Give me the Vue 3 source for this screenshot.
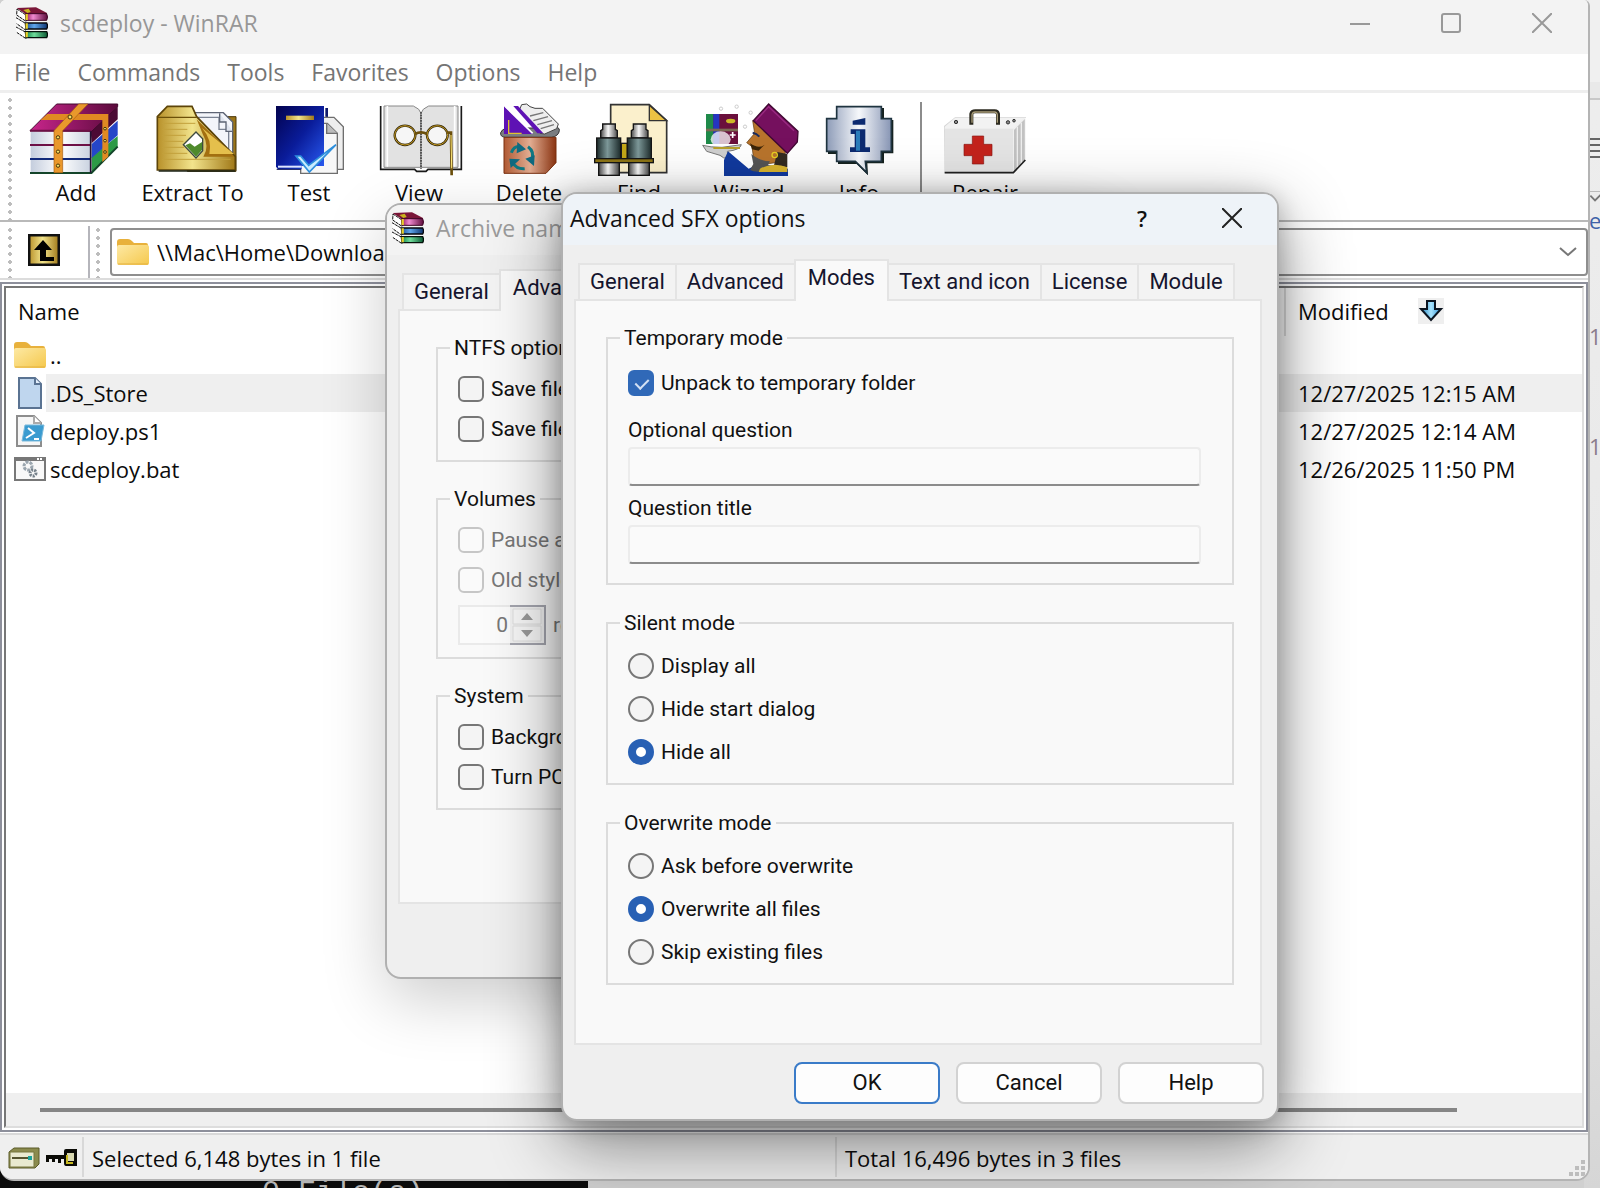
<script setup>
import { ref } from 'vue'

const menus = ['File', 'Commands', 'Tools', 'Favorites', 'Options', 'Help']

const files = [
  { icon: 'folder', name: '..', modified: '' },
  { icon: 'file', name: '.DS_Store', modified: '12/27/2025 12:15 AM', selected: true },
  { icon: 'ps1', name: 'deploy.ps1', modified: '12/27/2025 12:14 AM' },
  { icon: 'bat', name: 'scdeploy.bat', modified: '12/26/2025 11:50 PM' }
]

const sfxTabs = ['General', 'Advanced', 'Modes', 'Text and icon', 'License', 'Module']
const unpackTemp = ref(true)
const question = ref('')
const questionTitle = ref('')
const silent = ref('Hide all')
const overwrite = ref('Overwrite all files')
const silentModes = ['Display all', 'Hide start dialog', 'Hide all']
const overwriteModes = ['Ask before overwrite', 'Overwrite all files', 'Skip existing files']
</script>

<template>
  <div class="desktop">
    <svg class="defs" aria-hidden="true">
      <defs>
        <linearGradient id="mag" x1="0" x2="1"><stop offset="0" stop-color="#8a1257" /><stop offset=".35" stop-color="#f08ad0" /><stop offset="1" stop-color="#5e0c3c" /></linearGradient>
        <linearGradient id="blu" x1="0" x2="1"><stop offset="0" stop-color="#1c4f96" /><stop offset=".4" stop-color="#5fa5ea" /><stop offset="1" stop-color="#0d3470" /></linearGradient>
        <linearGradient id="grn" x1="0" x2="1"><stop offset="0" stop-color="#12804a" /><stop offset=".4" stop-color="#6fdc9a" /><stop offset="1" stop-color="#0b5a34" /></linearGradient>
        <linearGradient id="fold" x1="0" y1="0" x2="1" y2="1"><stop offset="0" stop-color="#fde9a4" /><stop offset="1" stop-color="#f5c84c" /></linearGradient>
        <linearGradient id="gold" x1="0" x2="1"><stop offset="0" stop-color="#b8912a" /><stop offset=".45" stop-color="#f2e48c" /><stop offset="1" stop-color="#a07818" /></linearGradient>
        <linearGradient id="page" x1="0" x2="1"><stop offset="0" stop-color="#c4cddd" /><stop offset=".5" stop-color="#ffffff" /><stop offset="1" stop-color="#c9d2e0" /></linearGradient>
        <linearGradient id="cover" x1="0" x2="1"><stop offset="0" stop-color="#c9258c" /><stop offset="1" stop-color="#5b0a3c" /></linearGradient>
        <linearGradient id="navy" x1="0" y1="0" x2="1" y2="1"><stop offset="0" stop-color="#02024e" /><stop offset=".5" stop-color="#0a1c9a" /><stop offset="1" stop-color="#2a5cf4" /></linearGradient>
        <linearGradient id="steel" x1="0" x2="1"><stop offset="0" stop-color="#8e9cb8" /><stop offset=".5" stop-color="#f6f8fb" /><stop offset="1" stop-color="#8795b4" /></linearGradient>
        <linearGradient id="lens" x1="0" x2="1"><stop offset="0" stop-color="#1d2b2b" /><stop offset=".45" stop-color="#7d9899" /><stop offset="1" stop-color="#1d2b2b" /></linearGradient>
        <linearGradient id="chrome" x1="0" x2="1"><stop offset="0" stop-color="#4a4a4a" /><stop offset=".45" stop-color="#f8f8f8" /><stop offset="1" stop-color="#4a4a4a" /></linearGradient>
        <linearGradient id="copper" x1="0" x2="1"><stop offset="0" stop-color="#b05a34" /><stop offset=".5" stop-color="#e2ad92" /><stop offset="1" stop-color="#8a3412" /></linearGradient>
        <linearGradient id="sky" x1="0" x2="1"><stop offset="0" stop-color="#1f7fb8" /><stop offset=".5" stop-color="#a8e4ff" /><stop offset="1" stop-color="#2b8fd0" /></linearGradient>
      </defs>
      <symbol id="books" viewBox="0 0 96 96">
        <path d="M0 32 30 50V70L2 50M0 60 30 76V95L2 76" fill="#fff" stroke="#111" stroke-width="3" stroke-dasharray="9 2" />
        <path d="M3 6 30 24V43L2 24Z" fill="#fff" stroke="#111" stroke-width="3" stroke-dasharray="9 2" />
        <path d="M2 3 60 1 93 18 92 22H30Z" fill="#7a1638" />
        <path d="M22 9 38 5 44 15 34 18Z" fill="#c9b51d" />
        <path d="M28 20H92Q97 30 92 40H30Z" fill="url(#mag)" stroke="#3d0524" stroke-width="3" />
        <path d="M28 48H92Q97 57 92 66H30Z" fill="url(#blu)" stroke="#05070d" stroke-width="4" />
        <path d="M28 74H92Q97 83 92 92H30Z" fill="url(#grn)" stroke="#04100a" stroke-width="4" />
        <path d="M32 21V39M32 49V65M32 75V91" stroke="#e8d02a" stroke-width="7" />
      </symbol>
      <symbol id="folder" viewBox="0 0 32 32">
        <path d="M0 6Q0 3 3 3H11Q13 3 15 5L17 7H29Q31 7 31 9V14H0Z" fill="#e8b13c" />
        <rect y="9" width="32" height="20" rx="2" fill="url(#fold)" />
        <path d="M1 28H31" stroke="#e3b040" stroke-width="1" />
      </symbol>
    </svg>

    <!-- terminal and file manager windows that lie behind -->
    <div class="terminal">0 File(s)</div>
    <div class="behind">
      <span class="behind-title"></span>
      <span class="behind-bar"></span>
      <span class="behind-lines"></span>
      <svg class="behind-chevron" viewBox="0 0 12 14"><path d="M1 4 6 9 12 3" fill="none" stroke="#777" stroke-width="2" /></svg>
      <span class="behind-text blue">e</span>
      <span class="behind-text">12</span>
      <span class="behind-text low">11</span>
    </div>

    <main class="window">
      <header class="titlebar">
        <svg class="app-icon"><use href="#books" /></svg>
        <h1>scdeploy - WinRAR</h1>
        <div class="controls">
          <button aria-label="Minimize"><svg viewBox="0 0 20 20"><path d="M0 11H20" /></svg></button>
          <button aria-label="Maximize"><svg viewBox="0 0 20 20"><rect x="1" y="1" width="18" height="18" rx="2" /></svg></button>
          <button aria-label="Close"><svg viewBox="0 0 20 20"><path d="M0 0 20 20M20 0 0 20" /></svg></button>
        </div>
      </header>

      <nav class="menubar"><button v-for="m in menus" :key="m">{{ m }}</button></nav>

      <div class="toolbar">
        <i class="grip"></i>
        <button class="tool">
          <svg viewBox="84 306 288 222">
            <path d="M275 470 353 408V440L275 522Z" fill="#2c9a46" /><path d="M275 432 353 362V406L275 474Z" fill="#2546c8" /><path d="M272 394 353 320V358L275 430Z" fill="#4c0a34" />
            <path d="M92 478H272V520H92Z" fill="url(#page)" /><path d="M92 436H272V476H92Z" fill="url(#page)" /><path d="M92 394H272V434H92Z" fill="url(#page)" />
            <path d="M90 392 170 312H353V320L275 394Z" fill="url(#cover)" stroke="#42082c" stroke-width="3" />
            <path d="M90 435H272M90 392H272" stroke="#6d1046" stroke-width="6" /><path d="M90 477H272" stroke="#122a7a" stroke-width="6" /><path d="M90 519H274L353 440" stroke="#14452a" stroke-width="6" fill="none" />
            <path d="M272 394V518" stroke="#241030" stroke-width="5" />
            <path d="M122 360 142 342H325V470L307 486V360Z" fill="#e08a22" /><path d="M162 392 236 312H264L188 392V518H162Z" fill="#e9982c" stroke="#a85c10" stroke-width="2" />
            <g fill="#f7e36a" stroke="#4a3608" stroke-width="3"><circle cx="210" cy="351" r="6" /><circle cx="174" cy="412" r="5" /><circle cx="174" cy="455" r="5" /><circle cx="174" cy="497" r="5" /><circle cx="315" cy="386" r="4" /><circle cx="315" cy="422" r="4" /><circle cx="315" cy="456" r="4" /></g>
          </svg>
          <span>Add</span>
        </button>
        <button class="tool wide">
          <svg viewBox="433 306 288 222">
            <path d="M560 350H706V514H560Z" fill="#9a7418" stroke="#4b3606" stroke-width="3" />
            <path d="M580 338H668L696 366V480H580Z" fill="#f3f5fa" stroke="#5d6474" stroke-width="4" /><path d="M590 352H655V388H684V470" fill="none" stroke="#7a8292" stroke-width="4" /><path d="M657 340V366H676V394H696" fill="#dfe4ee" stroke="#5d6474" stroke-width="4" />
            <path d="M470 510V350L500 319H574L588 350 704 470V510Z" fill="url(#gold)" stroke="#5d4408" stroke-width="5" />
            <path d="M472 352H588" stroke="#6d5008" stroke-width="4" /><path d="M484 370H584M484 388H560M484 406H556M484 424H548M484 442H550M484 460H560M484 478H690" stroke="#c2a03c" stroke-width="3" />
            <path d="M588 358 702 470H608Q628 440 606 402Z" fill="#a36f10" /><path d="M604 384Q636 420 626 462H700Z" fill="#e5bf4c" />
            <path d="M548 434 586 396 606 416V452L586 474Z" fill="#fff" stroke="#3e4a3e" stroke-width="4" /><path d="M554 436 568 430 582 440 604 426V450L586 470Z" fill="#4f8a2c" />
            <path d="M474 513H704" stroke="#1b2216" stroke-width="5" />
          </svg>
          <span>Extract To</span>
        </button>
        <button class="tool">
          <svg viewBox="783 306 288 222">
            <path d="M976 324H984V352L976 350Z" fill="#101a6a" />
            <path d="M965 352H1002L1030 380V508H965Z" fill="#eee" stroke="#6e6e6e" stroke-width="4" /><path d="M902 370H982L1012 400V520H902Z" fill="#f7f7f7" stroke="#6e6e6e" stroke-width="4" />
            <path d="M980 370V400H1012" fill="#bbb" stroke="#6e6e6e" stroke-width="4" />
            <path d="M828 318H972V498H905V508H834L828 500Z" fill="url(#navy)" /><path d="M834 500H905" stroke="#dfe6ff" stroke-width="6" /><path d="M830 508H902" stroke="#0a1250" stroke-width="3" />
            <rect x="858" y="347" width="84" height="13" fill="url(#gold)" />
            <path d="M888 468 902 468 926 496 1008 434 928 516Z" fill="#c9ecff" stroke="#2e8fdc" stroke-width="5" />
          </svg>
          <span>Test</span>
        </button>
        <button class="tool">
          <svg viewBox="3 36 288 222">
            <path d="M32 48V238H134L140 244H168L174 238H274V48" fill="#fff" stroke="#1a1a1a" stroke-width="5" />
            <path d="M42 48H130Q150 56 153 70V232H42Z" fill="#e2e2e2" stroke="#888" stroke-width="3" /><path d="M264 48H176Q156 56 153 70V232H264Z" fill="#e2e2e2" stroke="#888" stroke-width="3" />
            <path d="M52 48V230M254 48V230" stroke="#fff" stroke-width="5" />
            <path d="M153 66V236" stroke="#555" stroke-width="6" stroke-dasharray="5 3" />
            <g fill="#fff" fill-opacity=".7" stroke="#332606" stroke-width="7"><ellipse cx="105" cy="136" rx="31" ry="29" /><ellipse cx="202" cy="136" rx="31" ry="29" /></g>
            <g fill="none" stroke="#c79d24" stroke-width="3"><ellipse cx="105" cy="136" rx="31" ry="29" /><ellipse cx="202" cy="136" rx="31" ry="29" /></g>
            <path d="M135 132Q153 122 171 132M232 128H243L245 256" fill="none" stroke="#6b4f0c" stroke-width="8" /><path d="M243 135 245 235" stroke="#ffe97a" stroke-width="3" />
          </svg>
          <span>View</span>
        </button>
        <button class="tool">
          <svg viewBox="333 36 288 222">
            <path d="M392 128Q395 118 410 114H545Q570 108 568 122 566 138 545 142H405Q390 140 392 128Z" fill="#7a7d80" stroke="#333" stroke-width="3" />
            <path d="M448 60 455 44 470 42 480 50 495 55 518 55 565 102 560 116 524 132 510 130Z" fill="#eee" stroke="#444" stroke-width="3" />
            <path d="M480 78 520 68M490 92 534 80M502 104 546 92M512 116 552 104" stroke="#777" stroke-width="4" />
            <path d="M402 48 490 132H402Z" fill="#5e12b4" /><path d="M430 48H444L520 130H502Z" fill="#5e12b4" /><path d="M404 48 488 130" stroke="#fff" stroke-width="5" /><path d="M416 90V130H455" fill="none" stroke="#e0c22c" stroke-width="4" />
            <path d="M402 142H558V218L528 250H402Z" fill="url(#copper)" stroke="#7a3010" stroke-width="3" />
            <g fill="none" stroke="#0f7882" stroke-width="9"><path d="M424 188Q432 166 452 170" /><path d="M474 170Q496 186 484 212" /><path d="M464 236Q440 238 428 218" /></g>
            <path d="M442 156 468 178 440 190ZM466 206 492 228 494 196ZM418 206 450 208 422 234Z" fill="#0f6a80" />
          </svg>
          <span>Delete</span>
        </button>
        <button class="tool">
          <svg viewBox="663 36 288 222">
            <path d="M722 44H838L890 92V248H722Z" fill="#fbf0cc" stroke="#333" stroke-width="5" /><path d="M838 46V92H890Z" fill="#ecc244" stroke="#333" stroke-width="4" />
            <rect x="754" y="160" width="18" height="50" fill="#c4a818" stroke="#222" stroke-width="4" />
            <g stroke="#161616" stroke-width="4">
              <path d="M698 102H736V118L742 122V144H692V122L698 118Z" fill="url(#chrome)" /><path d="M790 102H828V118L834 122V144H784V122L790 118Z" fill="url(#chrome)" />
              <rect x="680" y="144" width="72" height="62" fill="url(#lens)" /><rect x="772" y="144" width="72" height="62" fill="url(#lens)" />
              <rect x="674" y="206" width="176" height="12" fill="#8c7416" />
              <rect x="686" y="218" width="62" height="38" fill="url(#chrome)" /><rect x="776" y="218" width="62" height="38" fill="url(#chrome)" />
            </g>
          </svg>
          <span>Find</span>
        </button>
        <button class="tool">
          <svg viewBox="33 36 288 222">
            <rect x="48" y="72" width="96" height="90" fill="#6a0f3c" /><rect x="48" y="72" width="22" height="90" fill="#1f8a4a" /><rect x="70" y="72" width="18" height="90" fill="#2436c0" />
            <path d="M48 120H144" stroke="#7b6a52" stroke-width="8" /><ellipse cx="122" cy="93" rx="14" ry="7" fill="#cdb928" /><ellipse cx="92" cy="148" rx="30" ry="24" fill="#fff" fill-opacity=".75" />
            <path d="M128 126V144M119 135H137" stroke="#fff" stroke-width="5" />
            <path d="M38 166Q60 172 96 172L154 164Q150 180 112 184L114 206Q100 206 90 196L50 184Z" fill="#cfcfcf" stroke="#777" stroke-width="3" /><path d="M70 174H150" stroke="#b7a02a" stroke-width="6" />
            <path d="M114 184 176 236 210 220 294 236V258H102V210Z" fill="#123a9e" />
            <path d="M188 92 194 130 170 158 186 170 190 200 230 222 282 214 286 186 250 130Z" fill="#b8742c" stroke="#5a3408" stroke-width="2" />
            <path d="M180 160Q206 178 224 164L206 182 186 178Z" fill="#3b2408" /><path d="M184 192Q206 212 240 214L226 240Q200 250 180 240L190 222Z" fill="#555" /><path d="M262 186 292 192V232L252 226Z" fill="#332a20" />
            <path d="M210 236Q250 214 292 232V246H206Z" fill="#d8b32e" />
            <path d="M190 92 236 42 324 124 322 156 292 190Z" fill="#75105e" stroke="#3f0832" stroke-width="4" /><path d="M198 92 236 50 312 122" fill="none" stroke="#9a2a82" stroke-width="4" />
            <path d="M188 128Q200 130 208 140" stroke="#1c2c5c" stroke-width="6" fill="none" /><circle cx="254" cy="195" r="8" fill="none" stroke="#e9cf22" stroke-width="4" />
            <g fill="none" stroke="#ccc" stroke-width="3"><circle cx="93" cy="56" r="5" /><circle cx="140" cy="50" r="5" /><circle cx="182" cy="68" r="5" /><circle cx="165" cy="110" r="5" /></g>
          </svg>
          <span>Wizard</span>
        </button>
        <button class="tool">
          <svg viewBox="363 36 288 222">
            <path d="M446 54H582V90H610V190H582V220H532L534 256 500 222H444V192H414V90H446Z" fill="#16221e" />
            <path d="M440 50H574V86H604V184H574V214H526L530 248 496 214H440V184H410V86H440Z" fill="url(#steel)" stroke="#1f3440" stroke-width="5" />
            <path d="M488 92 526 84V104H488ZM482 118H526V172H540V186H480V172H494V132H482Z" fill="#0c2a70" /><path d="M498 122H510V182H498Z" fill="#2b7cba" />
          </svg>
          <span>Info</span>
        </button>
        <i class="divider"></i>
        <button class="tool">
          <svg viewBox="741 36 288 222">
            <path d="M762 108 795 82H1008V210L970 250H764Z" fill="#d4d4d4" /><path d="M970 120 1006 84V210L970 248Z" fill="#c2c2c2" stroke="#fff" stroke-width="3" /><path d="M982 110V234M994 98V222" stroke="#eee" stroke-width="4" />
            <path d="M764 110 795 84H1004L970 118H764Z" fill="#f2f2f2" /><rect x="764" y="116" width="206" height="132" fill="#e4e4e4" />
            <path d="M764 248H970L1006 210" fill="none" stroke="#222" stroke-width="5" />
            <path d="M844 104V72Q846 64 856 64H914Q922 64 924 72V104" fill="none" stroke="#2c2a20" stroke-width="12" /><path d="M846 98V74Q848 66 856 66H914Q920 66 922 74V98" fill="none" stroke="#a89c78" stroke-width="4" />
            <g fill="#888" stroke="#333" stroke-width="3"><circle cx="798" cy="96" r="5" /><circle cx="954" cy="97" r="5" /><circle cx="972" cy="92" r="4" /></g>
            <path d="M847 138H881V163H906V197H881V222H847V197H822V163H847Z" fill="#c3231c" stroke="#8a1712" stroke-width="2" />
          </svg>
          <span>Repair</span>
        </button>
      </div>

      <div class="addressbar">
        <i class="grip"></i>
        <button class="up" aria-label="Up one level">
          <svg viewBox="0 0 32 32"><rect x="1" y="1" width="30" height="30" fill="url(#gold)" stroke="#111" stroke-width="3" /><path d="M15 6 24 16H18V23H26V27H12V16H6Z" fill="#000" /></svg>
        </button>
        <i class="grip second"></i>
        <label class="path">
          <svg class="path-icon"><use href="#folder" /></svg>
          <select aria-label="Address"><option>\\Mac\Home\Downloads</option></select>
          <svg class="chevron" viewBox="0 0 18 10"><path d="M1 1 9 8 17 1" /></svg>
        </label>
      </div>

      <section class="list">
        <div class="list-body">
          <table>
            <thead>
              <tr>
                <th colspan="2">Name</th>
                <th class="modified">
                  <div class="sort">Modified
                    <svg viewBox="0 0 26 26"><rect width="26" height="26" fill="#efefef" /><path d="M9 3H17V11H23L13 22 3 11H9Z" fill="url(#sky)" stroke="#0b1420" stroke-width="2" /></svg>
                  </div>
                </th>
              </tr>
            </thead>
            <tbody>
              <tr v-for="f in files" :key="f.name" :class="{ selected: f.selected }">
                <td class="icon">
                  <svg v-if="f.icon === 'folder'"><use href="#folder" /></svg>
                  <svg v-else-if="f.icon === 'file'" viewBox="0 0 32 32"><path d="M5 1H21L27 7V31H5Z" fill="#bfd6ee" stroke="#5a7392" stroke-width="2" /><path d="M21 1V7H27" fill="#e3eefa" stroke="#5a7392" stroke-width="2" /></svg>
                  <svg v-else-if="f.icon === 'ps1'" viewBox="0 0 32 32"><path d="M3 1H20L27 8V31H3Z" fill="#f6f6f6" stroke="#8d8d8d" stroke-width="2" /><path d="M20 1V8H27" fill="#fff" stroke="#aaa" stroke-width="2" /><path d="M11 10H30L27 26H8Z" fill="#3a9bd0" stroke="#79b9dc" /><path d="M14 13 20 18 12 23M20 24H25" fill="none" stroke="#fff" stroke-width="2" /></svg>
                  <svg v-else viewBox="0 0 32 32"><rect x="1" y="5" width="30" height="22" fill="#f8f8f8" stroke="#777" stroke-width="2" /><path d="M1 6H31" stroke="#777" stroke-width="4" /><path d="M23 6H28" stroke="#fff" stroke-dasharray="2 1" stroke-width="2" /><circle cx="14" cy="13" r="4" fill="none" stroke="#9aa5ae" stroke-width="3" stroke-dasharray="3 1" /><circle cx="19" cy="20" r="3" fill="none" stroke="#75808a" stroke-width="3" stroke-dasharray="2 1" /></svg>
                </td>
                <td class="name">{{ f.name }}</td>
                <td class="date">{{ f.modified }}</td>
              </tr>
            </tbody>
          </table>
          <div class="scrollbar"><span></span></div>
        </div>
      </section>

      <footer class="status">
        <svg viewBox="0 0 32 22"><path d="M1 5 6 1H31V17L27 21H1Z" fill="#8b8b4e" stroke="#5a5a28" /><path d="M2 5H26V20H2Z" fill="#e9ead0" stroke="#77773e" /><path d="M4 11H24" stroke="#555530" stroke-width="2" /><rect x="20" y="9" width="4" height="4" fill="#1aa39a" /></svg>
        <svg viewBox="0 0 32 22"><path d="M0 8H18V4Q18 2 20 2H31V19H20Q18 19 18 16V12H15V16H12V12H9V15H6V12H3V15H0Z" fill="#0b0b06" /><path d="M21 6H28V14H21Z" fill="#d8d8b0" /><path d="M21 8V16H27" fill="none" stroke="#c8b820" stroke-width="2" /></svg>
        <p>Selected 6,148 bytes in 1 file</p>
        <p>Total 16,496 bytes in 3 files</p>
        <svg class="resize" viewBox="0 0 16 16"><path d="M12 0H16V4H12ZM6 6H10V10H6ZM12 6H16V10H12ZM0 12H4V16H0ZM6 12H10V16H6ZM12 12H16V16H12Z" /></svg>
      </footer>
    </main>

    <section class="dialog archive" aria-label="Archive name and parameters">
      <header class="dialog-title">
        <svg class="app-icon"><use href="#books" /></svg>
        <h2>Archive name and parameters</h2>
      </header>
      <div class="tabs">
        <button>General</button>
        <button class="active">Advanced</button>
      </div>
      <div class="panel">
        <fieldset>
          <legend>NTFS options</legend>
          <label class="option"><input type="checkbox" />Save file security</label>
          <label class="option"><input type="checkbox" />Save file streams</label>
        </fieldset>
        <fieldset class="disabled">
          <legend>Volumes</legend>
          <label class="option"><input type="checkbox" disabled />Pause after each volume</label>
          <label class="option"><input type="checkbox" disabled />Old style volume names</label>
          <label class="option recovery">
            <span class="spin">
              <input type="text" value="0" disabled />
              <svg viewBox="0 0 36 40"><path d="M0 1H35V39H0" fill="#f1f1f1" stroke="#a4a5ae" stroke-width="2" /><path d="M3 4H31V19H3ZM3 21H31V36H3Z" fill="#f7f7f7" stroke="#dedede" /><path d="M11 15 17 8 23 15ZM11 25 17 32 23 25Z" fill="#999" /></svg>
            </span>recovery volumes
          </label>
        </fieldset>
        <fieldset>
          <legend>System</legend>
          <label class="option"><input type="checkbox" />Background archiving</label>
          <label class="option"><input type="checkbox" />Turn PC off when done</label>
        </fieldset>
      </div>
    </section>

    <section class="dialog sfx" role="dialog" aria-label="Advanced SFX options">
      <header class="dialog-title">
        <h2>Advanced SFX options</h2>
        <button class="help">?</button>
        <button class="close" aria-label="Close dialog"><svg viewBox="0 0 20 20"><path d="M0 0 20 20M20 0 0 20" /></svg></button>
      </header>
      <div class="tabs">
        <button v-for="t in sfxTabs" :key="t" :class="{ active: t === 'Modes' }">{{ t }}</button>
      </div>
      <div class="panel">
        <fieldset>
          <legend>Temporary mode</legend>
          <label class="option"><input v-model="unpackTemp" type="checkbox" />Unpack to temporary folder</label>
          <label class="field first" for="question">Optional question</label>
          <input id="question" v-model="question" type="text" />
          <label class="field" for="question-title">Question title</label>
          <input id="question-title" v-model="questionTitle" type="text" />
        </fieldset>
        <fieldset>
          <legend>Silent mode</legend>
          <label v-for="m in silentModes" :key="m" class="option"><input v-model="silent" type="radio" name="silent" :value="m" />{{ m }}</label>
        </fieldset>
        <fieldset>
          <legend>Overwrite mode</legend>
          <label v-for="m in overwriteModes" :key="m" class="option"><input v-model="overwrite" type="radio" name="overwrite" :value="m" />{{ m }}</label>
        </fieldset>
      </div>
      <div class="actions">
        <button class="default">OK</button>
        <button>Cancel</button>
        <button>Help</button>
      </div>
    </section>
  </div>
</template>

<style>
body { background: #cfcfcf; }
</style>

<style scoped>
* { box-sizing: border-box; }
button { padding: 0; border: 0; background: none; color: inherit; font: inherit; white-space: nowrap; }
h1, h2, p { margin: 0; font-size: 22px; font-weight: 400; white-space: nowrap; }
h1, h2 { font-size: 23px; }

.desktop {
  position: relative;
  min-height: 100vh;
  padding: 0 10px 7px 0;
  overflow: hidden;
  display: flex;
  background: #d0d0d0;
  color: #0c0c0c;
  font: 22px/30px "Open Sans", "Noto Sans", sans-serif;
}
.defs { position: absolute; width: 0; height: 0; }

.terminal {
  position: absolute; left: 0; bottom: 0; width: 588px; height: 24px; padding: 12px 0 0 262px;
  overflow: hidden; background: #0b0b0b; color: #b5b5b5; font: 30px/34px "Liberation Mono", monospace;
}
.behind {
  position: absolute; right: 0; top: 0; bottom: 0; width: 16px; padding-left: 5px;
  display: flex; flex-direction: column; overflow: hidden;
  background: linear-gradient(#eee, #e8e8e8 60%, #d6d6d6);
}
.behind-title { height: 82px; background: #f0f0f0; }
.behind-bar { height: 18px; border-bottom: 2px solid #c8c8c8; background: #e9e9e9; }
.behind-lines { height: 20px; margin: 38px 0 33px; background: repeating-linear-gradient(#666 0 2px, #eee 2px 6px); }
.behind-chevron { width: 12px; height: 14px; border-top: 1px solid #bbb; flex: none; }
.behind-text { width: 20px; height: 30px; color: #8a7d8c; }
.behind-text.blue { color: #3f62a8; margin-bottom: 86px; }
.behind-text.low { margin-top: 80px; }

.window {
  position: relative;
  flex: 1;
  min-width: 0;
  display: flex;
  flex-direction: column;
  border: solid #b4b4b4;
  border-width: 0 2px 2px 0;
  border-radius: 6px 6px 14px 14px;
  overflow: hidden;
  background: #fff;
}
.titlebar { display: flex; align-items: center; height: 54px; padding: 0 36px 8px 16px; background: #f3f3f3; }
.app-icon { width: 32px; height: 32px; flex: none; }
.titlebar h1 { margin-left: 12px; color: #979797; }
.controls { display: flex; gap: 71px; margin-left: auto; }
.controls button { width: 20px; height: 20px; display: flex; }
.controls svg, .close svg { width: 20px; height: 20px; fill: none; stroke: #999; stroke-width: 2; }

.menubar { display: flex; align-items: center; gap: 27px; height: 39px; padding-left: 14px; border-bottom: 3px solid #eee; color: #757575; font-size: 23px; }

.toolbar { display: flex; height: 129px; padding: 3px 0 0 8px; border-bottom: 2px solid #b9b9b9; }
.grip { width: 4px; background: radial-gradient(circle, #bdbdbd 2px, transparent 2px) 0 0 / 4px 8px; }
.toolbar .grip { margin-right: 9px; }
.tool { width: 110px; padding-top: 6px; display: flex; flex-direction: column; align-items: center; justify-content: flex-start; flex: none; line-height: 32px; }
.tool.wide { width: 123px; }
.tool svg { width: 96px; height: 74px; overflow: visible; flex: none; }
.divider { width: 2px; height: 120px; margin: 6px 8px 0 6px; background: #8c8c8c; }

.addressbar { display: flex; height: 58px; padding: 4px 0 0 8px; border-bottom: 2px solid #dcdcdc; }
.up { width: 78px; padding: 0 0 4px 16px; border-right: 2px solid #b5b5bb; display: flex; align-items: center; }
.up svg { width: 32px; height: 32px; }
.grip.second { margin: 0 10px 0 6px; }
.path { display: flex; align-items: center; flex: 1; height: 48px; margin-top: 2px; padding: 0 9px 0 5px; border: 2px solid #8e8e8e; border-radius: 4px; }
.path-icon { width: 32px; height: 32px; }
.path select { flex: 1; margin-left: 8px; padding: 0; border: 0; background: none; appearance: none; color: #0c0c0c; font: inherit; }
.chevron { width: 18px; height: 10px; fill: none; stroke: #777; stroke-width: 2; }

.list { flex: 1; display: flex; margin-top: 2px; padding: 2px; border: 2px solid #8d8f9b; }
.list-body { flex: 1; display: flex; flex-direction: column; justify-content: space-between; border: 2px solid #777; border-right-color: #ddd; border-bottom-color: #ddd; }
table { width: 100%; border-collapse: collapse; table-layout: auto; }
th { height: 48px; padding: 0 0 2px 12px; text-align: left; font-weight: 400; }
th.modified { width: 297px; border-left: 2px solid #ddd; padding-left: 12px; }
.sort { display: flex; align-items: center; gap: 29px; }
.sort svg { width: 26px; height: 26px; }
td { height: 38px; padding: 0; }
td.icon { width: 40px; padding-left: 8px; }
td.icon svg { display: block; width: 32px; height: 32px; }
td.name { padding-left: 4px; }
td.date { padding-left: 13px; }
.selected .name, .selected .date { background: #efefef; }
.scrollbar { height: 33px; padding: 15px 125px 0 34px; background: #efefef; }
.scrollbar span { display: block; height: 4px; background: #858585; }

.status { display: flex; align-items: center; height: 46px; margin-top: 1px; padding-left: 8px; border-top: 2px solid #d8d8d8; background: #efefef; }
.status svg { width: 32px; height: 22px; margin: 2px 6px 0 0; flex: none; }
.status p { height: 40px; padding-left: 8px; border-left: 2px solid #d8d8d8; line-height: 42px; }
.status p:first-of-type { width: 753px; margin-left: -2px; }
.status .resize { width: 16px; height: 16px; margin: 22px 3px 0 auto; fill: #bdbdbd; }

.dialog {
  position: absolute;
  border: 2px solid #b0b0b0;
  border-radius: 16px;
  background: #efefef;
  color: #111;
  font: 22px/24px Roboto, "Liberation Sans", sans-serif;
}
.archive { left: 385px; top: 203px; width: 720px; height: 776px; padding: 0 11px; box-shadow: 0 20px 64px rgba(0, 0, 0, .2); }
.sfx { left: 561px; top: 192px; width: 718px; padding: 0 15px 15px 11px; box-shadow: 0 24px 70px rgba(0, 0, 0, .46), 0 4px 24px rgba(0, 0, 0, .22); }
.dialog-title { display: flex; align-items: center; height: 51px; margin: 0 -15px 0 -11px; border-radius: 14px 14px 0 0; font-family: "Open Sans", "Noto Sans", sans-serif; }
.archive .dialog-title { height: 50px; padding: 0 0 4px 5px; margin: 0 -11px; background: #f3f3f3; color: #9b9b9b; }
.archive h2 { margin-left: 12px; }
.sfx .dialog-title { padding: 0 35px 4px 7px; background: #eef3f8; }
.help { margin-left: auto; margin-right: 75px; font-weight: 600; }
.close { display: flex; width: 20px; }
.close svg { stroke: #222; }

.tabs { display: flex; align-items: flex-end; height: 54px; padding-left: 4px; }
.tabs button { height: 36px; padding: 0 10px; border: 2px solid #e4e4e4; border-width: 2px 0 0 2px; background: #f3f3f3; color: #15152e; }
.tabs button:last-child { border-right-width: 2px; }
.tabs .active { position: relative; height: 42px; margin-bottom: -2px; padding: 0 12px 6px; border-right-width: 2px; background: #f9f9f9; }
.tabs .active + button { border-left: 0; }
.panel { display: flex; flex-direction: column; gap: 26px; padding: 25px 26px 58px 30px; border: 2px solid #e4e4e4; background: #f9f9f9; font-size: 21px; }
.archive .panel { height: 595px; padding: 25px 26px 0 36px; gap: 25px; }

fieldset { margin: 0; min-width: 0; padding: 18px 31px 18px 20px; border: 2px solid #dcdcdc; display: flex; flex-direction: column; gap: 17px; }
legend { margin-left: -8px; padding: 0 4px; height: 24px; }
.option { display: flex; align-items: center; height: 26px; gap: 7px; white-space: nowrap; }
.archive fieldset { gap: 14px; padding-top: 16px; }
.archive fieldset.disabled { padding-bottom: 14px; }
.disabled .option { color: #777; }
.archive .option.recovery { height: 36px; }
.spin { display: flex; width: 88px; height: 40px; }
.spin input { width: 52px; height: 40px; padding: 0 2px; border: 2px solid #eaeaea; border-right: 0; text-align: right; background: #fbfbfb; color: #777; font: inherit; }
.spin svg { width: 36px; height: 40px; }

input[type="checkbox"], input[type="radio"] { appearance: none; flex: none; width: 26px; height: 26px; margin: 0; border: 2px solid #777; border-radius: 6px; background: #f4f4f4; }
input[type="radio"] { border-radius: 50%; }
input[type="checkbox"]:disabled { border-color: #c6c6c6; background: #fafafa; }
input[type="checkbox"]:checked { border-color: #3069b8; background: #3069b8; }
input[type="checkbox"]:checked::after { content: ""; display: block; width: 6px; height: 11px; margin: 4px 0 0 8px; border: solid #d3e1f4; border-width: 0 2px 2px 0; transform: rotate(45deg); }
input[type="radio"]:checked { border: 8px solid #2860b4; background: #fff; }

.sfx fieldset:first-child { gap: 0; padding-top: 20px; padding-bottom: 19px; }
.field { height: 24px; margin: 10px 0 5px; }
.field.first { margin-top: 22px; }
.panel > fieldset > input { height: 39px; padding: 0 8px; border: 2px solid #ececec; border-bottom-color: #8c8c8c; border-radius: 4px; background: #fafafa; font: inherit; }

.actions { display: flex; justify-content: flex-end; gap: 16px; margin: 17px -2px 0 0; }
.actions button { width: 146px; height: 42px; border: 2px solid #d2d2d2; border-radius: 8px; background: #fdfdfd; }
.actions .default { border-color: #3a7bc8; }
</style>
